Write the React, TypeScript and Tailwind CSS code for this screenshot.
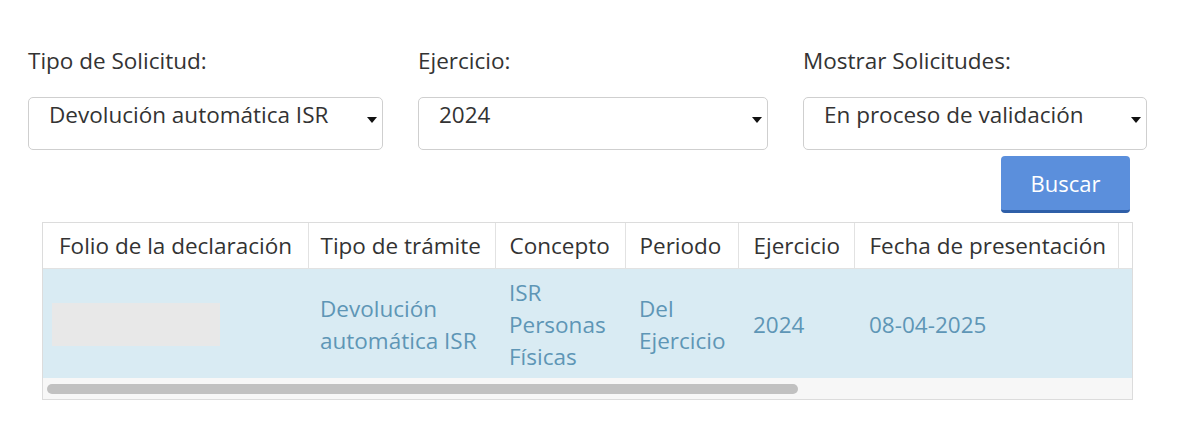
import React from "react";

// Filter columns
const filters = [
  { label: "Tipo de Solicitud:", value: "Devolución automática ISR", width: "w-[355px]" },
  { label: "Ejercicio:", value: "2024", width: "w-[350px]" },
  { label: "Mostrar Solicitudes:", value: "En proceso de validación", width: "w-[344px]" },
];

const columns = [
  { title: "Folio de la declaración", width: "w-[266px]", pad: "pl-[17px]" },
  { title: "Tipo de trámite", width: "w-[187px]", pad: "pl-[12px]" },
  { title: "Concepto", width: "w-[130px]", pad: "pl-[14px]" },
  { title: "Periodo", width: "w-[113px]", pad: "pl-[14px]" },
  { title: "Ejercicio", width: "w-[116px]", pad: "pl-[15px]" },
  { title: "Fecha de presentación", width: "w-[264px]", pad: "pl-[15px]" },
  { title: "", width: "w-[60px]", pad: "pl-[14px]" },
];

function Caret() {
  return (
    <svg width="10" height="6" viewBox="0 0 10 6" className="shrink-0">
      <path d="M0 0 L10 0 L5 6 Z" fill="#111" />
    </svg>
  );
}

function SelectBox({ value }: { value: string }) {
  return (
    <div className="flex h-[53px] items-start rounded-[5px] border border-[#cfcfcf] bg-white pl-5 pr-[5px]">
      <span className="mt-[2px] flex-1 truncate text-[22.5px] leading-[30px] text-[#333]">{value}</span>
      <div className="mt-[19px]">
        <Caret />
      </div>
    </div>
  );
}

export default function App() {
  const row = [
    null,
    ["Devolución", "automática ISR"],
    ["ISR", "Personas", "Físicas"],
    ["Del", "Ejercicio"],
    ["2024"],
    ["08-04-2025"],
    [],
  ];

  return (
    <div className="h-[429px] w-[1200px] bg-white font-['Open_Sans',sans-serif]">
      <div className="flex gap-[35px] pl-[28px] pt-[46px]">
        {filters.map((f) => (
          <div key={f.label} className={f.width}>
            <div className="text-[22.5px] leading-[30px] text-[#333]">{f.label}</div>
            <div className="mt-[21px]">
              <SelectBox value={f.value} />
            </div>
          </div>
        ))}
      </div>

      <div className="flex justify-end pr-[70px] pt-[6px]">
        <button className="h-[57px] w-[129px] rounded-[4px] border-b-[3px] border-[#2f5fa8] bg-[#5b8fdc] text-[22px] text-white">
          Buscar
        </button>
      </div>

      <div className="ml-[42px] mt-[9px] w-[1091px] border border-[#dcdcdc]">
        <div className="overflow-hidden">
          <table className="-ml-px w-[1136px] table-fixed border-collapse">
            <thead>
              <tr className="h-[45px] bg-white">
                {columns.map((c, i) => (
                  <th
                    key={i}
                    className={`${c.width} ${c.pad} border-r border-b border-[#e2e2e2] pt-[2px] text-left text-[22.5px] font-normal leading-[30px] text-[#333] whitespace-nowrap`}
                  >
                    {c.title}
                  </th>
                ))}
              </tr>
            </thead>
            <tbody>
              <tr className="h-[110px] bg-[#d9ebf3]">
                {row.map((cell, i) => (
                  <td key={i} className={`${columns[i].pad} pt-[3px] align-middle text-[22.5px] leading-[32px] text-[#5e96b6]`}>
                    {cell === null ? (
                      <div className="-ml-[7px] h-[43px] w-[168px] bg-[#e8e8e8]" />
                    ) : (
                      cell.map((line) => (
                        <div key={line} className="whitespace-nowrap">
                          {line}
                        </div>
                      ))
                    )}
                  </td>
                ))}
              </tr>
            </tbody>
          </table>
        </div>
        <div className="flex h-[21px] items-center bg-[#f7f7f7] pl-[4px]">
          <div className="h-[10px] w-[751px] rounded-full bg-[#c1c1c1]" />
        </div>
      </div>
    </div>
  );
}
